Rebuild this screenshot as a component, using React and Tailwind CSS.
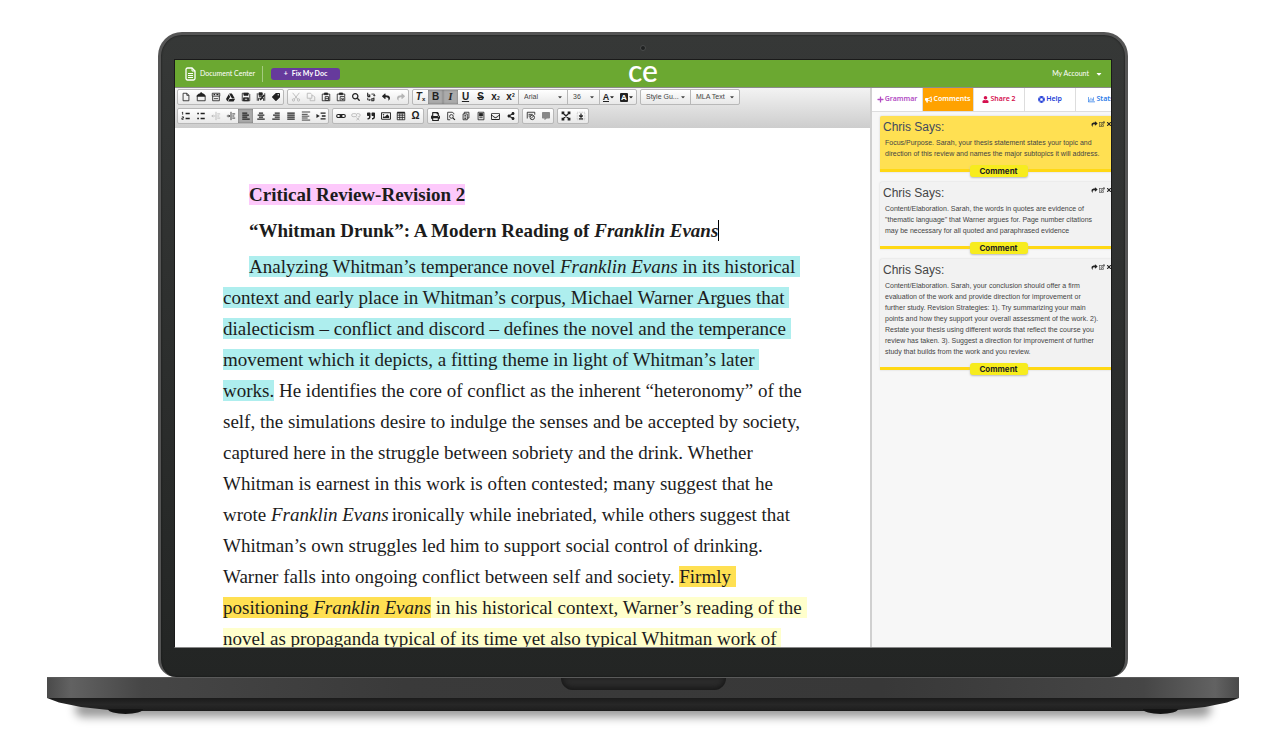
import React, { useState } from 'react';
import {
  FaGoogleDrive, FaTag, FaSearch, FaReply, FaShare, FaQuoteRight, FaRegImage,
  FaPrint, FaRegEnvelope, FaShareAlt, FaCommentAlt, FaPlus, FaBullhorn, FaUser, FaLifeRing,
  FaRegChartBar, FaRegEdit, FaTimes, FaCaretDown,
} from 'react-icons/fa';

// 12x12 line glyphs for the editor toolbar
const glyphs = {
  page: <path d="M2.5 1.5h4.5l2.5 2.5v6.5h-7zM7 1.5v2.5h2.5" />,
  folder: <><path d="M1.5 4.5h9.5v6h-9.5z" /><path d="M1 5l2-2.5h1.5l1-1.5h1.5l1 1.5h1.5l1.5 2.5z" fill="currentColor" /></>,
  template: <><path d="M1.5 1.5h9v3.5h-9zM2 5v5.5h8v-5.5M3.5 8h5" /><path d="M3 3.2h2M6.5 3.2h2.5" strokeWidth="1.5" /></>,
  save: <><path d="M1.5 1.5h7.5l1.5 1.5v7.5h-9z" /><path d="M3.5 1.5h5v2.5h-5zM3 7h6v3.5h-6z" fill="currentColor" /><path d="M4.5 8.7h3" stroke="#fff" /></>,
  saveAs: <><path d="M1.5 10.5v-9M10.5 1.5v9M3.5 5.5h5M3 10.5v-3h6v3" /><path d="M3.5 1h4v3h-4z" fill="currentColor" /><path d="M5 9.5l5-6" strokeWidth="1.8" /></>,
  cut: <><path d="M2 1l6 7.5M10 1l-6 7.5" /><circle cx="3" cy="9.5" r="1.4" /><circle cx="9" cy="9.5" r="1.4" /></>,
  copy: <path d="M1.5 1.5h4l1.5 1.5v4.5h-5.5zM7 4.5h2l1.5 1.5v4.5h-5.5v-3" />,
  paste: <><path d="M4 2.5h-2.5v8h9v-8h-2.5" /><path d="M4 1.2h4v2h-4z" fill="currentColor" /><path d="M5 5.5h4v4.5h-4zM5 7.7h4" /></>,
  pasteWord: <><path d="M4 2.5h-2.5v8h3M10.5 5v-2.5h-2.5" /><path d="M4 1.2h4v2h-4z" fill="currentColor" /><path d="M5 5.5h5.5v5h-5.5zM6.5 7.5l1 2 1-2 1 2" /></>,
  replace: <><path d="M2 1v4.5M2 3.5h2.5v2h-2.5M9.5 6.5v4M9.5 8h-2.5v2.5h2.5" strokeWidth="1.3" /><path d="M6.5 2.5h3.5v2.5M8.8 3.8l1.2 1.2 1-1.2M2 7v2.5h3M4 8.2l1.2 1.3-1.2 1.2" /></>,
  ol: <><path d="M2 1v3.5M1 2h1M1 7h2v1.5h-2v1.5h2" /><path d="M5.5 3h5M5.5 9h5" strokeWidth="1.6" /></>,
  ul: <path d="M1.5 3h2M1.5 9h2M5.5 3h5M5.5 9h5" strokeWidth="2" />,
  outdent: <path d="M6 1v10M7.5 3.5h3.5M7.5 6h2.5M7.5 8.5h3.5M5 6h-4M2.5 4.5l-1.5 1.5 1.5 1.5" />,
  indent: <path d="M6 1v10M7.5 3.5h3.5M7.5 6h2.5M7.5 8.5h3.5M1 6h3.5M3 4.5l1.5 1.5-1.5 1.5" />,
  left: <path d="M1.5 2.5h6M1.5 4.9h8M1.5 7.3h6M1.5 9.7h9" strokeWidth="1.5" />,
  center: <path d="M3.5 2.5h5M2 4.9h8M3.5 7.3h5M1.5 9.7h9" strokeWidth="1.5" />,
  right: <path d="M4.5 2.5h6M2.5 4.9h8M4.5 7.3h6M1.5 9.7h9" strokeWidth="1.5" />,
  justify: <path d="M1.5 2.5h9M1.5 4.9h9M1.5 7.3h9M1.5 9.7h9" strokeWidth="1.5" />,
  height: <path d="M1 1.2h10M1 4h7M1 6.2h9M1 8.4h7M1 10.9h10" />,
  pageBreak: <><path d="M5.5 2.5h6M5.5 9.5h6M7 6h4.5" strokeWidth="1.6" /><path d="M0.5 3.5l4 2.5-4 2.5z" fill="currentColor" stroke="none" /></>,
  link: <><rect x="0.8" y="4.2" width="6" height="3.6" rx="1.8" strokeWidth="1.3" /><rect x="5.2" y="4.2" width="6" height="3.6" rx="1.8" strokeWidth="1.3" /><path d="M4 6h4" strokeWidth="1.3" /></>,
  unlink: <><rect x="0.8" y="3.2" width="6" height="3.6" rx="1.8" /><path d="M7 3.2h2.200a1.800 1.800 0 0 1 0 3.600h-1M6.500 8l3.500 3M10 8l-3.500 3" /></>,
  table: <><path d="M1.5 2h9v8.5h-9zM1.5 5h9M1.5 7.7h9M4.5 3v7.5M7.5 3v7.5" /><path d="M1.5 2h9" strokeWidth="2" /></>,
  preview: <><path d="M9.5 4v-1l-2-1.5h-5.5v9h3" /><circle cx="6.5" cy="6.5" r="2.2" /><path d="M8.2 8.2l2.5 2.5" strokeWidth="1.5" /></>,
  clipboard: <path d="M2.5 3.5h5v7h-5zM4 3.5v-2h5.5v7h-2M4 5.5h2M4 7.2h2M4 9h2" />,
  book: <><path d="M2.5 1.5h7v9h-7z" /><path d="M4 3h4v3h-4zM4 8h4" fill="currentColor" /></>,
  review: <><path d="M1.5 9v-7.5h9v3M3 4h5M3 6h2.5" /><circle cx="7.5" cy="7.7" r="2.7" /><path d="M6 9l3-3" /></>,
  expand: <path d="M1.5 4v-2.5h2.5M8 1.5h2.5v2.5M10.5 8v2.5h-2.5M4 10.5h-2.5v-2.5M2 2l8 8M10 2l-8 8" strokeWidth="1.6" />,
  download: <><path d="M1.5 1.5h9v9h-9z" stroke="#bbb" strokeDasharray="1 1" /><path d="M6 3v4M3.8 5.5l2.2 2 2.2-2M3.5 9.5h5" strokeWidth="1.5" /></>,
};

const Glyph = ({ name }) => (
  <svg viewBox="0 0 12 12" className="h-[10px] w-[10px]" fill="none" stroke="currentColor">{glyphs[name]}</svg>
);

const Group = ({ children }) => (
  <div className="flex h-4 shrink-0 items-stretch overflow-hidden rounded-[2px] border border-[#b8b8b8] bg-linear-to-b from-white to-[#e8e8e8]">
    {children}
  </div>
);

const Tool = ({ label, active, off, children }) => (
  <button
    type="button"
    aria-label={label}
    title={label}
    className={`flex w-[15px] items-center justify-center font-['Liberation_Sans'] text-[10px] leading-none font-bold ${active ? 'bg-[#aaa] shadow-[inset_0_0_2px_#666]' : ''} ${off ? 'text-[#b5b5b5]' : 'text-[#222]'}`}
  >
    {children}
  </button>
);

const Pick = ({ label, value, wide, first }) => (
  <span className={`flex items-center pr-1 pl-[5px] text-[#444] ${first ? '' : 'border-l border-[#b8b8b8]'} ${wide ? 'w-[49px]' : 'w-8'}`}>
    <select aria-label={label} className="min-w-0 flex-1 appearance-none bg-transparent font-['Liberation_Sans'] text-[7px] leading-[10px]">
      <option>{value}</option>
    </select>
    <FaCaretDown className="h-[6px] w-[6px] shrink-0" />
  </span>
);

const Toolbar = () => (
  <div role="toolbar" className="flex flex-col gap-[3px] bg-linear-to-b from-[#f3f3f3] to-[#cdcdcd] px-[2px] pt-px pb-1">
    <div className="flex gap-[3px]">
      <Group>
        <Tool label="New"><Glyph name="page" /></Tool>
        <Tool label="Open"><Glyph name="folder" /></Tool>
        <Tool label="Templates"><Glyph name="template" /></Tool>
        <Tool label="Drive"><FaGoogleDrive className="h-[9px] w-[9px]" /></Tool>
        <Tool label="Save"><Glyph name="save" /></Tool>
        <Tool label="Save as"><Glyph name="saveAs" /></Tool>
        <Tool label="Tag"><FaTag className="h-2 w-2 rotate-90" /></Tool>
      </Group>
      <Group>
        <Tool label="Cut" off><Glyph name="cut" /></Tool>
        <Tool label="Copy" off><Glyph name="copy" /></Tool>
        <Tool label="Paste"><Glyph name="paste" /></Tool>
        <Tool label="Paste from Word"><Glyph name="pasteWord" /></Tool>
        <Tool label="Find"><FaSearch className="h-2 w-2" /></Tool>
        <Tool label="Replace"><Glyph name="replace" /></Tool>
        <Tool label="Undo"><FaReply className="h-2 w-2" /></Tool>
        <Tool label="Redo" off><FaShare className="h-2 w-2" /></Tool>
      </Group>
      <Group>
        <Tool label="Remove format"><i>T</i><sub className="text-[6px]">x</sub></Tool>
        <Tool label="Bold" active>B</Tool>
        <Tool label="Italic" active><i className="font-['Liberation_Serif']">I</i></Tool>
        <Tool label="Underline"><u>U</u></Tool>
        <Tool label="Strike"><s>S</s></Tool>
        <Tool label="Subscript">x<sub className="text-[5px]">2</sub></Tool>
        <Tool label="Superscript">x<sup className="text-[5px]">2</sup></Tool>
        <Pick label="Font" value="Arial" wide />
        <Pick label="Size" value="36" />
        <span className="flex w-[37px] justify-around border-l border-[#b8b8b8]">
          <Tool label="Text colour"><span className="border-b border-[#222] text-[9px] leading-[8px]">A</span><FaCaretDown className="h-[6px] w-[6px]" /></Tool>
          <Tool label="Background colour"><span className="rounded-[1px] bg-[#222] px-px text-[8px] leading-[9px] text-white">A</span><FaCaretDown className="h-[6px] w-[6px]" /></Tool>
        </span>
      </Group>
      <Group>
        <Pick label="Style guide" value="Style Gu..." wide first />
        <Pick label="Style" value="MLA Text" wide />
      </Group>
    </div>
    <div className="flex gap-[3px]">
      <Group>
        <Tool label="Numbered list"><Glyph name="ol" /></Tool>
        <Tool label="Bulleted list"><Glyph name="ul" /></Tool>
        <Tool label="Outdent" off><Glyph name="outdent" /></Tool>
        <Tool label="Indent"><Glyph name="indent" /></Tool>
        <Tool label="Align left" active><Glyph name="left" /></Tool>
        <Tool label="Center"><Glyph name="center" /></Tool>
        <Tool label="Align right"><Glyph name="right" /></Tool>
        <Tool label="Justify"><Glyph name="justify" /></Tool>
        <Tool label="Line height"><Glyph name="height" /></Tool>
        <Tool label="Page break"><Glyph name="pageBreak" /></Tool>
      </Group>
      <Group>
        <Tool label="Link"><Glyph name="link" /></Tool>
        <Tool label="Unlink" off><Glyph name="unlink" /></Tool>
        <Tool label="Quote"><FaQuoteRight className="h-2 w-2" /></Tool>
        <Tool label="Image"><FaRegImage className="h-[10px] w-[10px]" /></Tool>
        <Tool label="Table"><Glyph name="table" /></Tool>
        <Tool label="Symbol">Ω</Tool>
      </Group>
      <Group>
        <Tool label="Print"><FaPrint className="h-[9px] w-[9px]" /></Tool>
        <Tool label="Preview"><Glyph name="preview" /></Tool>
        <Tool label="Clipboard"><Glyph name="clipboard" /></Tool>
        <Tool label="Citations"><Glyph name="book" /></Tool>
        <Tool label="Mail"><FaRegEnvelope className="h-[9px] w-[9px]" /></Tool>
        <Tool label="Share"><FaShareAlt className="h-2 w-2" /></Tool>
      </Group>
      <Group>
        <Tool label="Review"><Glyph name="review" /></Tool>
        <Tool label="Add comment"><FaCommentAlt className="h-2 w-2 text-[#888]" /></Tool>
      </Group>
      <Group>
        <Tool label="Full screen"><Glyph name="expand" /></Tool>
        <Tool label="Download"><Glyph name="download" /></Tool>
      </Group>
    </div>
  </div>
);

const Essay = () => (
  <article className="min-h-0 flex-1 overflow-hidden bg-white pt-[51px] pl-12 font-['Liberation_Serif'] text-[19px] leading-[31px] whitespace-pre text-[#1c1c1c]">
    <h1 className="mb-[5px] pl-[26px] font-bold"><mark className="bg-[#fdc9fb] text-inherit">Critical Review-Revision 2</mark></h1>
    <h2 className="mb-[5px] pl-[26px] font-bold">“Whitman Drunk”: A Modern Reading of <i className="border-r border-black">Franklin Evans</i></h2>
    <p className="indent-[26px]">
      <mark className="bg-[#aeeeee] text-inherit">
        {'Analyzing Whitman’s temperance novel '}<i>Franklin Evans</i>{' in its historical \n'}
        {'context and early place in Whitman’s corpus, Michael Warner Argues that \n'}
        {'dialecticism – conflict and discord – defines the novel and the temperance \n'}
        {'movement which it depicts, a fitting theme in light of Whitman’s later \n'}
        {'works.'}
      </mark>
      {' He identifies the core of conflict as the inherent “heteronomy” of the\n'}
      {'self, the simulations desire to indulge the senses and be accepted by society,\n'}
      {'captured here in the struggle between sobriety and the drink. Whether\n'}
      {'Whitman is earnest in this work is often contested; many suggest that he\n'}
      {'wrote '}<i className="mr-[3px]">Franklin Evans</i>{'ironically while inebriated, while others suggest that\n'}
      {'Whitman’s own struggles led him to support social control of drinking.\n'}
      {'Warner falls into ongoing conflict between self and society. '}
      <mark className="bg-[#ffe052] text-inherit">{'Firmly \n'}{'positioning '}<i>Franklin Evans</i></mark>
      <mark className="bg-[#ffffcc] text-inherit">
        {' in his historical context, Warner’s reading of the \n'}
        {'novel as propaganda typical of its time yet also typical Whitman work of '}
      </mark>
    </p>
  </article>
);

const tabs = [
  { name: 'Grammar', icon: FaPlus, color: 'text-[#b14cc4]' },
  { name: 'Comments', icon: FaBullhorn, color: 'text-[#fff]' },
  { name: 'Share 2', icon: FaUser, color: 'text-[#d5104f]' },
  { name: 'Help', icon: FaLifeRing, color: 'text-[#2440d8]' },
  { name: 'Stats', icon: FaRegChartBar, color: 'text-[#2a7be8]' },
];

const comments = [
  {
    active: true,
    lines: ['Focus/Purpose. Sarah, your thesis statement states your topic and', 'direction of this review and names the major subtopics it will address.'],
  },
  {
    lines: ['Content/Elaboration. Sarah, the words in quotes are evidence of', '"thematic language" that Warner argues for. Page number citations', 'may be necessary for all quoted and paraphrased evidence'],
  },
  {
    lines: [
      'Content/Elaboration. Sarah, your conclusion should offer a firm',
      'evaluation of the work and provide direction for improvement or',
      'further study. Revision Strategies: 1). Try summarizing your main',
      'points and how they support your overall assessment of the work. 2).',
      'Restate your thesis using different words that reflect the course you',
      'review has taken. 3). Suggest a direction for improvement of further',
      'study that builds from the work and you review.',
    ],
  },
];

const CommentCard = ({ active, lines }) => (
  <section className={`relative rounded-t-[2px] border-b-3 border-[#ffd814] pt-1 pr-[5px] pb-[10px] pl-[3px] shadow-[0_0_2px_#ccc] ${active ? 'bg-[#ffe052]' : 'bg-[#f2f2f2]'}`}>
    <header className="flex items-start justify-between">
      <h3 className={`text-[12px] leading-[14px] ${active ? 'text-[#3f4a60]' : 'text-[#444]'}`}>Chris Says:</h3>
      <div className="flex gap-px pt-px text-[#222]">
        <button type="button" aria-label="Reply"><FaShare className="h-[6px] w-[7px]" /></button>
        <button type="button" aria-label="Edit"><FaRegEdit className="h-[6px] w-[6px]" /></button>
        <button type="button" aria-label="Delete"><FaTimes className="h-[6px] w-[6px]" /></button>
      </div>
    </header>
    <p className="pt-[3px] pl-[2px] text-[7px] leading-[11px] whitespace-pre text-[#444]">{lines.join('\n')}</p>
    <button type="button" className="absolute -bottom-2 left-1/2 h-3 w-[58px] -translate-x-1/2 rounded-[3px] bg-[#f7ec1e] font-['Inter'] text-[8px] leading-3 font-bold text-[#222] shadow-[0_1px_2px_#bbb]">
      Comment
    </button>
  </section>
);

const Sidebar = () => {
  const [current, setCurrent] = useState('Comments');
  return (
    <aside className="w-[241px] shrink-0 overflow-hidden border-l-2 border-[#d0d0d0] bg-[#f7f7f7] font-['Liberation_Sans']">
      <div className="w-[255px]">
        <nav className="grid h-6 grid-cols-5 border-b border-[#ddd] bg-white">
          {tabs.map(({ name, icon: Icon, color }) => (
            <button
              key={name}
              type="button"
              onClick={() => setCurrent(name)}
              className={`flex items-center justify-center gap-px border-r border-[#ddd] font-['Noto_Sans'] text-[7px] font-semibold ${current === name ? 'bg-[#ffa200]' : ''} ${color}`}
            >
              <Icon className="h-[7px] w-[7px]" />
              {name}
            </button>
          ))}
        </nav>
        <div className="flex flex-col gap-[10px] py-1 pr-[10px] pl-2">
          {comments.map((comment, i) => <CommentCard key={i} {...comment} />)}
        </div>
      </div>
    </aside>
  );
};

const Header = () => (
  <header className="grid h-7 shrink-0 grid-cols-3 items-center border-b border-[#8b8b8b] bg-[#6ba831] px-2 font-['Lato'] text-[7px] text-white">
    <div className="flex items-center pl-[2px]">
      <svg viewBox="0 0 11 14" className="mr-1 h-[14px] w-[11px]" fill="none" stroke="currentColor">
        <path d="M1 2.5a1.5 1.5 0 0 1 1.5-1.5h4.5l3 3v7.5a1.5 1.5 0 0 1-1.5 1.5h-6a1.5 1.5 0 0 1-1.5-1.5z" strokeWidth="1.3" />
        <path d="M7 1v3h3M3 6.5h5M3 8.5h5M3 10.5h5" />
      </svg>
      <a href="#documents">Document Center</a>
      <span className="mr-2 ml-[7px] h-4 w-px bg-[#a5cb80]" />
      <button type="button" className="flex h-[12px] w-[69px] items-center justify-center gap-1 rounded-[3px] bg-[#663a9c] font-bold">
        <span>+</span> Fix My Doc
      </button>
    </div>
    <div className="pb-2 text-center text-[30px] leading-[16px] font-medium">ce</div>
    <button type="button" className="flex items-center gap-[6px] justify-self-end">
      My Account <FaCaretDown className="h-2 w-2" />
    </button>
  </header>
);

const Foot = () => <span className="h-[5px] w-[35px] bg-[#141414] [border-radius:0_0_50%_50%/0_0_100%_100%]" />;

const App = () => (
  <main className="flex h-screen flex-col overflow-hidden bg-white pt-8 pr-[43px] pb-[26px] pl-[47px]">
    <div className="mx-[111px] flex min-h-0 flex-1 flex-col rounded-t-[24px] rounded-b-[18px] border-3 border-b-0 border-[#555] bg-linear-to-b from-[#363837] to-[#232524] px-[13px] pb-[29px] shadow-[inset_0_0_2px_#111]">
      <div className="flex h-6 shrink-0 items-center justify-center pt-[2px]">
        <span className="h-[6px] w-[6px] rounded-full border border-[#4a4c4c] bg-[#202222]" />
      </div>
      <div className="flex min-h-0 flex-1 flex-col overflow-hidden border border-[#1a1a1a] border-b-[#888]">
        <Header />
        <div className="flex min-h-0 flex-1">
          <div className="flex min-w-0 flex-1 flex-col overflow-hidden">
            <Toolbar />
            <Essay />
          </div>
          <Sidebar />
        </div>
      </div>
    </div>
    <div className="relative h-[37px] shrink-0">
      <div className="absolute inset-x-7 top-6 h-4 rounded-[8px] bg-black/40 blur-[5px]" />
      <div className="relative flex h-[21px] justify-center border-t border-[#5a5a5a] bg-[linear-gradient(90deg,#4a4a4a,#626262_2%,#464646_8%,#3a3a3a_30%,#383838_70%,#464646_92%,#626262_98%,#4a4a4a)]">
        <div className="h-3 w-[165px] rounded-b-[14px] bg-[#2c2c2c] shadow-[inset_0_-2px_6px_#141414]" />
      </div>
      <div className="relative h-[13px] bg-linear-to-b from-[#1b1b1b] via-[#272727] to-[#1d1d1d] [clip-path:polygon(0_0,100%_0,calc(100%-12px)_35%,calc(100%-34px)_70%,calc(100%-64px)_95%,calc(100%-90px)_100%,90px_100%,64px_95%,34px_70%,12px_35%)]" />
      <div className="absolute inset-x-[61px] bottom-0 flex justify-between"><Foot /><Foot /></div>
    </div>
  </main>
);

export default App;
